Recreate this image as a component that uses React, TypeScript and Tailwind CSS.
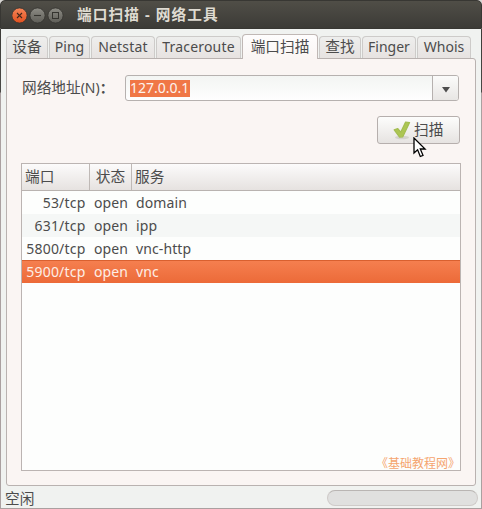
import React from "react";

type Tab = { label: string; look: string; active?: boolean };

const tabs: Tab[] = [
  { label: "设备", look: "w-[42px] text-[14.67px]" },
  { label: "Ping", look: "w-[41px]" },
  { label: "Netstat", look: "w-[64px] tracking-[0.2px]" },
  { label: "Traceroute", look: "w-[85px] tracking-[0.2px]" },
  { label: "端口扫描", look: "w-[76px] text-[14.67px]", active: true },
  { label: "查找", look: "w-[42px] text-[14.67px]" },
  { label: "Finger", look: "w-[54px]" },
  { label: "Whois", look: "w-[54px]" },
];

const rows = [
  { port: "53/tcp", state: "open", service: "domain", look: "bg-[#fdfefd]" },
  { port: "631/tcp", state: "open", service: "ipp", look: "bg-[#f5f7f6]" },
  { port: "5800/tcp", state: "open", service: "vnc-http", look: "bg-[#fdfefd]" },
  {
    port: "5900/tcp",
    state: "open",
    service: "vnc",
    look: "border-t border-[#d9602f] bg-linear-to-b from-[#f57f4f] to-[#ec6a38] text-[#fdeee6]",
  },
];

function TitleBar() {
  return (
    <header className="flex h-[29px] shrink-0 items-center rounded-t-[5px] border-x border-t border-b border-[#383733] bg-linear-to-b from-[#504e47] to-[#3c3b37] pl-[11px]">
      <svg width="54" height="18" viewBox="0 0 54 18" fill="none" className="mt-[3px] shrink-0">
        <defs>
          <linearGradient id="close" x1="0" y1="0" x2="0" y2="1">
            <stop offset="0" stopColor="#f78658" />
            <stop offset="1" stopColor="#e2501f" />
          </linearGradient>
          <linearGradient id="plain" x1="0" y1="0" x2="0" y2="1">
            <stop offset="0" stopColor="#8d8c85" />
            <stop offset="1" stopColor="#5e5d57" />
          </linearGradient>
        </defs>
        <circle cx="7.5" cy="8.5" r="7.6" fill="url(#close)" stroke="#33322e" strokeWidth=".8" />
        <circle cx="25.5" cy="8.5" r="7.6" fill="url(#plain)" stroke="#33322e" strokeWidth=".8" />
        <circle cx="43.5" cy="8.5" r="7.6" fill="url(#plain)" stroke="#33322e" strokeWidth=".8" />
        <path d="M5 6l5 5M10 6l-5 5" stroke="#43281c" strokeWidth="1.1" />
        <path d="M22 8.5h7" stroke="#35342f" strokeWidth="1.1" />
        <rect x="40.5" y="5.5" width="6" height="6" stroke="#35342f" />
      </svg>
      <h1 className="ml-[11px] pb-px text-[14.67px] font-bold tracking-[1.1px] text-[#dfdbd2]">端口扫描 - 网络工具</h1>
    </header>
  );
}

function TabBar() {
  return (
    <nav className="flex h-[24px] items-end gap-px pl-[5px]">
      {tabs.map((t) => (
        <div
          key={t.label}
          className={
            t.active
              ? `${t.look} relative z-10 -mb-px flex h-[25px] items-center justify-center rounded-t-[4px] border border-b-0 border-[#c0b8b5] bg-linear-to-b from-[#fefdfd] to-[#faf5f3] pb-[2px]`
              : `${t.look} flex h-[22px] items-center justify-center rounded-t-[4px] border border-b-0 border-[#cdcbc9] bg-linear-to-b from-[#eeeeed] to-[#e7e3e1] pb-[2px]`
          }
        >
          {t.label}
        </div>
      ))}
    </nav>
  );
}

export default function App() {
  return (
    <div className="bg-[#d8d6d3]">
      <main className="flex h-[509px] w-[482px] flex-col overflow-hidden whitespace-nowrap font-['Noto_Sans','Noto_Sans_CJK_SC',sans-serif] text-[14px] leading-none text-[#4c4c4c]">
        <TitleBar />
        <div className="flex grow flex-col bg-[linear-gradient(#3c3b37_0,#4a4946_63px,#aaa0a0_64px)] px-px pb-px">
          <div className="flex grow flex-col bg-[#f0f2f0] pt-[5px]">
            <TabBar />
            <section className="ml-[5px] flex h-[428px] w-[470px] flex-col rounded-[3px] rounded-tl-none border border-[#b9b2b0] bg-[#faf5f3] pl-[14px] pt-[16px]">
              <div className="flex h-[26px] items-center">
                <label className="w-[104px] pb-px pl-px">
                  <span className="text-[14.67px]">网络地址</span>(N)<span className="font-bold">：</span>
                </label>
                <div className="flex h-[26px] w-[334px] overflow-hidden rounded-[3px] border border-[#b6b1af] bg-linear-to-b from-[#f3f5f3] to-[#fefefe]">
                  <div className="flex grow items-center pl-[4px]">
                    <span className="flex h-[17px] w-[60px] items-center bg-[#f07746] text-[#fdf3ee]">127.0.0.1</span>
                  </div>
                  <div className="flex w-[26px] items-center justify-center border-l border-[#b6b1af] bg-linear-to-b from-[#fbfbfa] to-[#e8e6e4]">
                    <svg width="8" height="6" viewBox="0 0 8 6" className="mt-[4px]">
                      <path d="M0 0h8L4 5.5z" fill="#4d4d4d" />
                    </svg>
                  </div>
                </div>
              </div>
              <button className="relative ml-[356px] mt-[15px] flex h-[28px] w-[83px] items-center rounded-[3px] border border-[#b6afad] bg-linear-to-b from-[#fdfdfc] to-[#e6e3e1] pl-[15px]">
                <svg width="20" height="20" viewBox="0 0 20 20">
                  <ellipse cx="9" cy="17.5" rx="7" ry="1.8" fill="#d4d2cd" />
                  <path d="M1.2 9.8l3.6-1.2 2.9 3.6L12.6 2l4 .6L9.8 16.8l-3.2.3z" fill="#adc653" stroke="#a3bd50" strokeWidth="1.2" strokeLinejoin="round" />
                </svg>
                <span className="ml-px pb-px text-[14.67px]">扫描</span>
                <svg width="14" height="21" viewBox="0 0 14 21" className="absolute left-[35px] top-[20px]">
                  <path d="M1 1v15l3.6-3.2L7.3 19.5l2.7-1.2-2.7-6.3h4.8z" fill="#fff" stroke="#000" strokeWidth="1.3" />
                </svg>
              </button>
              <div className="mt-[19px] flex h-[308px] w-[440px] flex-col border border-[#bbb4b2] bg-[#fdfefd]">
                <div className="flex h-[27px] border-b border-[#b9b3b0] bg-linear-to-b from-[#fcfbfb] to-[#e6e2e0] text-[14.67px]">
                  <div className="flex w-[68px] items-center border-r border-[#bfb9b6] pb-px pl-[3px]">端口</div>
                  <div className="flex w-[42px] items-center justify-center border-r border-[#bfb9b6] pb-px">状态</div>
                  <div className="flex items-center pb-px pl-[3px]">服务</div>
                </div>
                {rows.map((r) => (
                  <div key={r.port} className={`flex h-[23px] items-center ${r.look}`}>
                    <span className="w-[64px] pr-[0.5px] text-right tracking-[0.2px]">{r.port}</span>
                    <span className="w-[42px] pl-[8px] tracking-[0.1px]">{r.state}</span>
                    <span className="pl-[8px] tracking-[0.1px]">{r.service}</span>
                  </div>
                ))}
                <p className="mt-auto mr-[6px] ml-auto text-[12px] text-[#f5a56f] [font-feature-settings:'halt']">《基础教程网》</p>
              </div>
            </section>
            <footer className="flex grow items-center justify-between pl-[4px] pr-[3px]">
              <span className="pt-[2px] text-[14.67px]">空闲</span>
              <div className="mt-[2px] h-[16px] w-[151px] rounded-full border border-[#cfcbc9] border-t-[#b9b5b3] bg-[#e0e0df]" />
            </footer>
          </div>
        </div>
      </main>
    </div>
  );
}
